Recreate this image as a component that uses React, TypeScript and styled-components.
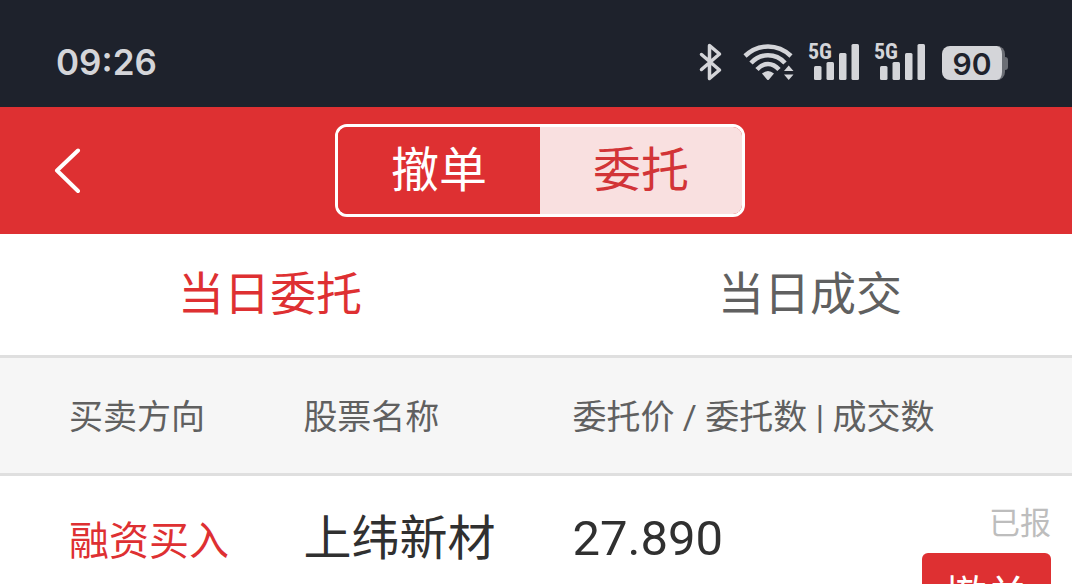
import React from "react";
import styled, { createGlobalStyle } from "styled-components";

const color = {
  status: "#1e222c",
  statusInk: "#d4d5d9",
  red: "#de3032",
  pink: "#f9e0e0",
  line: "#dfdfdf",
  head: "#f6f6f6",
  grey: "#606060",
  ink: "#303030",
  faint: "#bdbdbd",
};

const GlobalStyle = createGlobalStyle`
  * { box-sizing: border-box; }
  body {
    margin: 0;
    background: #fff;
    font-family: Roboto, "Noto Sans CJK SC", sans-serif;
  }
  button { font-family: inherit; cursor: pointer; }
`;

const Screen = styled.div`
  display: flex;
  flex-direction: column;
  height: 100vh;
  overflow: hidden;
`;

const StatusBar = styled.div`
  flex: none;
  display: flex;
  align-items: center;
  justify-content: space-between;
  height: 107px;
  padding: 17px 64px 0 56px;
  background: ${color.status};
  color: ${color.statusInk};
`;

const Clock = styled.time`
  font: 600 35px/40px Inter, sans-serif;
`;

const StatusIcons = styled.div`
  display: flex;
  align-items: center;
  gap: 12px;

  svg { display: block; }
`;

const Battery = styled.div`
  display: flex;
  align-items: center;
  padding: 2px 0 0 2px;
`;

const BatteryBody = styled.div`
  width: 63px;
  height: 34px;
  border-right: 3px solid #6b6e75;
  border-radius: 8px;
  background: ${color.statusInk};
  color: ${color.status};
  font: 600 30px/36px Inter, sans-serif;
  text-align: center;
`;

const BatteryTip = styled.div`
  width: 3px;
  height: 13px;
  border-radius: 0 3px 3px 0;
  background: #6b6e75;
`;

const NavBar = styled.header`
  flex: none;
  display: grid;
  grid-template-columns: 1fr auto 1fr;
  align-items: center;
  height: 127px;
  padding: 0 46px 0 54px;
  background: ${color.red};
`;

const BackButton = styled.button`
  justify-self: start;
  padding: 0;
  border: 0;
  background: none;

  svg { display: block; }
`;

const Segments = styled.div`
  display: flex;
  overflow: hidden;
  border: 3px solid #fff;
  border-radius: 12px;
`;

const Segment = styled.button<{ $active?: boolean }>`
  width: 202px;
  height: 87px;
  padding: 0;
  border: 0;
  background: ${(p) => (p.$active ? color.pink : color.red)};
  color: ${(p) => (p.$active ? "#d23437" : "#fff")};
  font-size: 48px;
  line-height: 87px;
`;

const Tabs = styled.nav`
  flex: none;
  display: grid;
  grid-template-columns: 1fr 1fr;
  gap: 16px;
  padding-left: 8px;
  border-bottom: 3px solid ${color.line};
`;

const Tab = styled.button<{ $active?: boolean }>`
  height: 121px;
  padding: 0;
  border: 0;
  background: none;
  color: ${(p) => (p.$active ? color.red : color.grey)};
  font-size: 46px;
  line-height: 121px;
`;

const Orders = styled.table`
  width: 100%;
  border-collapse: separate;
  border-spacing: 0;
  table-layout: fixed;
`;

const Col = styled.col<{ $width?: string }>`
  width: ${(p) => p.$width ?? "auto"};
`;

const HeadCell = styled.th`
  height: 118px;
  padding: 0 0 2px;
  border-bottom: 3px solid ${color.line};
  background: ${color.head};
  color: ${color.grey};
  font-size: 34px;
  font-weight: 400;
  text-align: left;
  white-space: nowrap;

  &:first-child { padding-left: 69px; }
`;

const Cell = styled.td`
  padding: 28px 0 0;
  color: ${color.ink};
  font-size: 48px;
  line-height: 70px;
  vertical-align: baseline;
  white-space: nowrap;
`;

const DirectionCell = styled(Cell)`
  padding-left: 69px;
  color: ${color.red};
  font-size: 40px;
`;

const PriceCell = styled(Cell)`
  font-size: 49px;
`;

const ActionCell = styled(Cell)`
  padding-right: 21px;
  vertical-align: top;
`;

const Actions = styled.div`
  display: flex;
  flex-direction: column;
  align-items: flex-end;
  gap: 9px;
`;

const State = styled.span`
  color: ${color.faint};
  font-size: 31px;
  line-height: 40px;
`;

const CancelButton = styled.button`
  width: 129px;
  height: 88px;
  padding: 0;
  border: 0;
  border-radius: 6px;
  background: ${color.red};
  color: #fff;
  font-size: 42px;
  line-height: 88px;
`;

const BluetoothIcon = () => (
  <svg width="32" height="40" viewBox="0 0 32 40" fill="none" stroke={color.statusInk} strokeWidth="3.5" strokeLinecap="round" strokeLinejoin="round" aria-hidden="true">
    <path d="M3.5 12.5 21.5 28 11.5 36.5V3.5L21.5 12 3.5 27.5" />
  </svg>
);

const WifiIcon = () => (
  <svg width="54" height="40" viewBox="0 0 54 40" aria-hidden="true">
    <g fill="none" stroke={color.statusInk} strokeWidth="4.5">
      <path d="M3 14Q13 4.5 26 4.5T49 14" />
      <path d="M9 21Q16 13.3 26 13.3T43 21" />
      <path d="M15 27.5Q20 22 26 22T37 27.5" />
    </g>
    <path fill={color.statusInk} d="M20 31.5Q26 26.5 32 31.5L27 37.5Q26 38.5 25 37.5ZM46.7 23.5 51.5 29H42ZM42 32.5H51.5L46.7 38Z" />
  </svg>
);

const SignalIcon = () => (
  <svg width="54" height="56" viewBox="0 -8 54 56" fill={color.statusInk} aria-label="5G">
    <text x="0" y="17" fontFamily="'Liberation Sans Narrow', 'Roboto Condensed', Roboto, sans-serif" fontWeight="700" fontSize="22">5G</text>
    <rect x="6" y="24" width="7.5" height="14" rx="1.5" />
    <rect x="18.5" y="20" width="7.5" height="18" rx="1.5" />
    <rect x="31" y="11" width="7.5" height="27" rx="1.5" />
    <rect x="43.5" y="2" width="7.5" height="36" rx="1.5" />
  </svg>
);

const BackIcon = () => (
  <svg width="28" height="46" viewBox="0 0 28 46" fill="none" stroke="#fff" strokeWidth="4" strokeLinecap="round" strokeLinejoin="round" aria-hidden="true">
    <path d="M24 2.5 3 22.5 24 43" />
  </svg>
);

export default function App() {
  return (
    <Screen>
      <GlobalStyle />
      <StatusBar>
        <Clock>09:26</Clock>
        <StatusIcons>
          <BluetoothIcon />
          <WifiIcon />
          <SignalIcon />
          <SignalIcon />
          <Battery>
            <BatteryBody>90</BatteryBody>
            <BatteryTip />
          </Battery>
        </StatusIcons>
      </StatusBar>
      <NavBar>
        <BackButton aria-label="返回">
          <BackIcon />
        </BackButton>
        <Segments>
          <Segment>撤单</Segment>
          <Segment $active>委托</Segment>
        </Segments>
      </NavBar>
      <Tabs>
        <Tab $active>当日委托</Tab>
        <Tab>当日成交</Tab>
      </Tabs>
      <Orders>
        <colgroup>
          <Col $width="28.3%" />
          <Col $width="25.1%" />
          <Col />
          <Col $width="180px" />
        </colgroup>
        <thead>
          <tr>
            <HeadCell scope="col">买卖方向</HeadCell>
            <HeadCell scope="col">股票名称</HeadCell>
            <HeadCell scope="col" colSpan={2}>委托价 / 委托数 | 成交数</HeadCell>
          </tr>
        </thead>
        <tbody>
          <tr>
            <DirectionCell>融资买入</DirectionCell>
            <Cell>上纬新材</Cell>
            <PriceCell>27.890</PriceCell>
            <ActionCell>
              <Actions>
                <State>已报</State>
                <CancelButton>撤单</CancelButton>
              </Actions>
            </ActionCell>
          </tr>
        </tbody>
      </Orders>
    </Screen>
  );
}
